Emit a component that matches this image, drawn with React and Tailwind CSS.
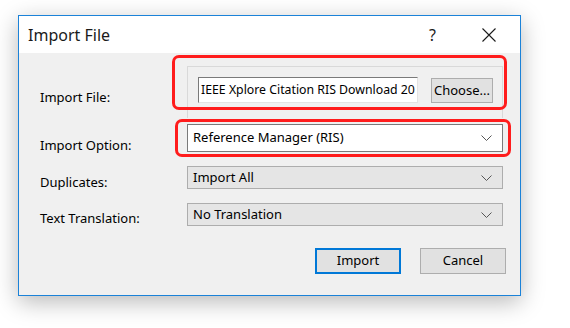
import React from 'react';

const font = { fontFamily: '"Segoe UI", "Noto Sans", "Open Sans", sans-serif' };

function Chevron() {
  return (
    <svg width="11" height="6" viewBox="0 0 11 6" className="shrink-0">
      <path d="M0.5 0.5 L5.5 5.5 L10.5 0.5" fill="none" stroke="#555" strokeWidth="1" />
    </svg>
  );
}

function Combo({ value, active, height }) {
  return (
    <div
      className={`flex items-center justify-between w-[316px] pl-[5px] pr-[10px] text-[13px] text-black border ${
        active ? 'bg-white border-[#7a7a7a]' : 'bg-[#e5e5e5] border-[#adadad]'
      } ${height}`}
    >
      <span>{value}</span>
      <Chevron />
    </div>
  );
}

function App() {
  return (
    <div className="w-[570px] h-[328px] bg-white pl-[18px] pt-[15px]" style={font}>
      <div className="w-[503px] h-[281px] border border-[#1b82d8] bg-[#f0f0f0] shadow-[0_6px_22px_rgba(0,0,0,0.28)] flex flex-col">
        {/* title bar */}
        <div className="h-[37px] bg-white flex items-center pl-[9px] pr-[24px]">
          <span className="text-[16px] text-[#1a1a1a] flex-1">Import File</span>
          <span className="text-[16px] text-[#1a1a1a] mr-[46px]">?</span>
          <svg width="14" height="14" viewBox="0 0 14 14">
            <path d="M0.5 0.5 L13.5 13.5 M13.5 0.5 L0.5 13.5" stroke="#1a1a1a" strokeWidth="1.1" />
          </svg>
        </div>

        {/* body */}
        <div className="relative flex-1 pt-[13px] pl-[21px] text-[13px] text-black">
          <div className="flex h-[52px]">
            <div className="w-[147px] pt-[23px] leading-4">Import File:</div>
            <div className="w-[316px] border-t border-l border-r border-[#d9d9d9] pt-[10px] pl-[10px] flex items-start">
              <div className="w-[220px] h-[26px] bg-white border-t border-l border-[#7a7a7a] border-b border-r border-b-[#e3e3e3] border-r-[#e3e3e3] flex items-center pl-[2px] text-[12.3px] whitespace-nowrap overflow-hidden">
                IEEE Xplore Citation RIS Download 20
              </div>
              <button className="ml-[13px] mt-[1px] w-[62px] h-[25px] bg-[#e1e1e1] border border-[#adadad] flex items-center justify-center text-[13px]">
                Choose...
              </button>
            </div>
          </div>

          <div className="flex mt-[6px]">
            <div className="w-[147px] pt-[13px] leading-4">Import Option:</div>
            <Combo value="Reference Manager (RIS)" active height="h-[28px]" />
          </div>

          <div className="flex mt-[13px]">
            <div className="w-[147px] pt-[8px] leading-4">Duplicates:</div>
            <Combo value="Import All" height="h-[23px]" />
          </div>

          <div className="flex mt-[13px]">
            <div className="w-[147px] pt-[7px] leading-4">Text Translation:</div>
            <Combo value="No Translation" height="h-[23px]" />
          </div>

          <div className="flex justify-end gap-[19px] mt-[22px] pr-[14px]">
            <button className="w-[86px] h-[26px] bg-[#e1e1e1] border-2 border-[#0078d7] text-[13px]">Import</button>
            <button className="w-[86px] h-[26px] bg-[#e1e1e1] border border-[#adadad] text-[13px]">Cancel</button>
          </div>

          {/* red annotation boxes */}
          <div className="absolute left-[153px] top-[2px] w-[335px] h-[55px] border-[3px] border-[#ff1c1c] rounded-[7px]" />
          <div className="absolute left-[156px] top-[66px] w-[336px] h-[38px] border-[3px] border-[#ff1c1c] rounded-[7px]" />
        </div>
      </div>
    </div>
  );
}

export default App;
